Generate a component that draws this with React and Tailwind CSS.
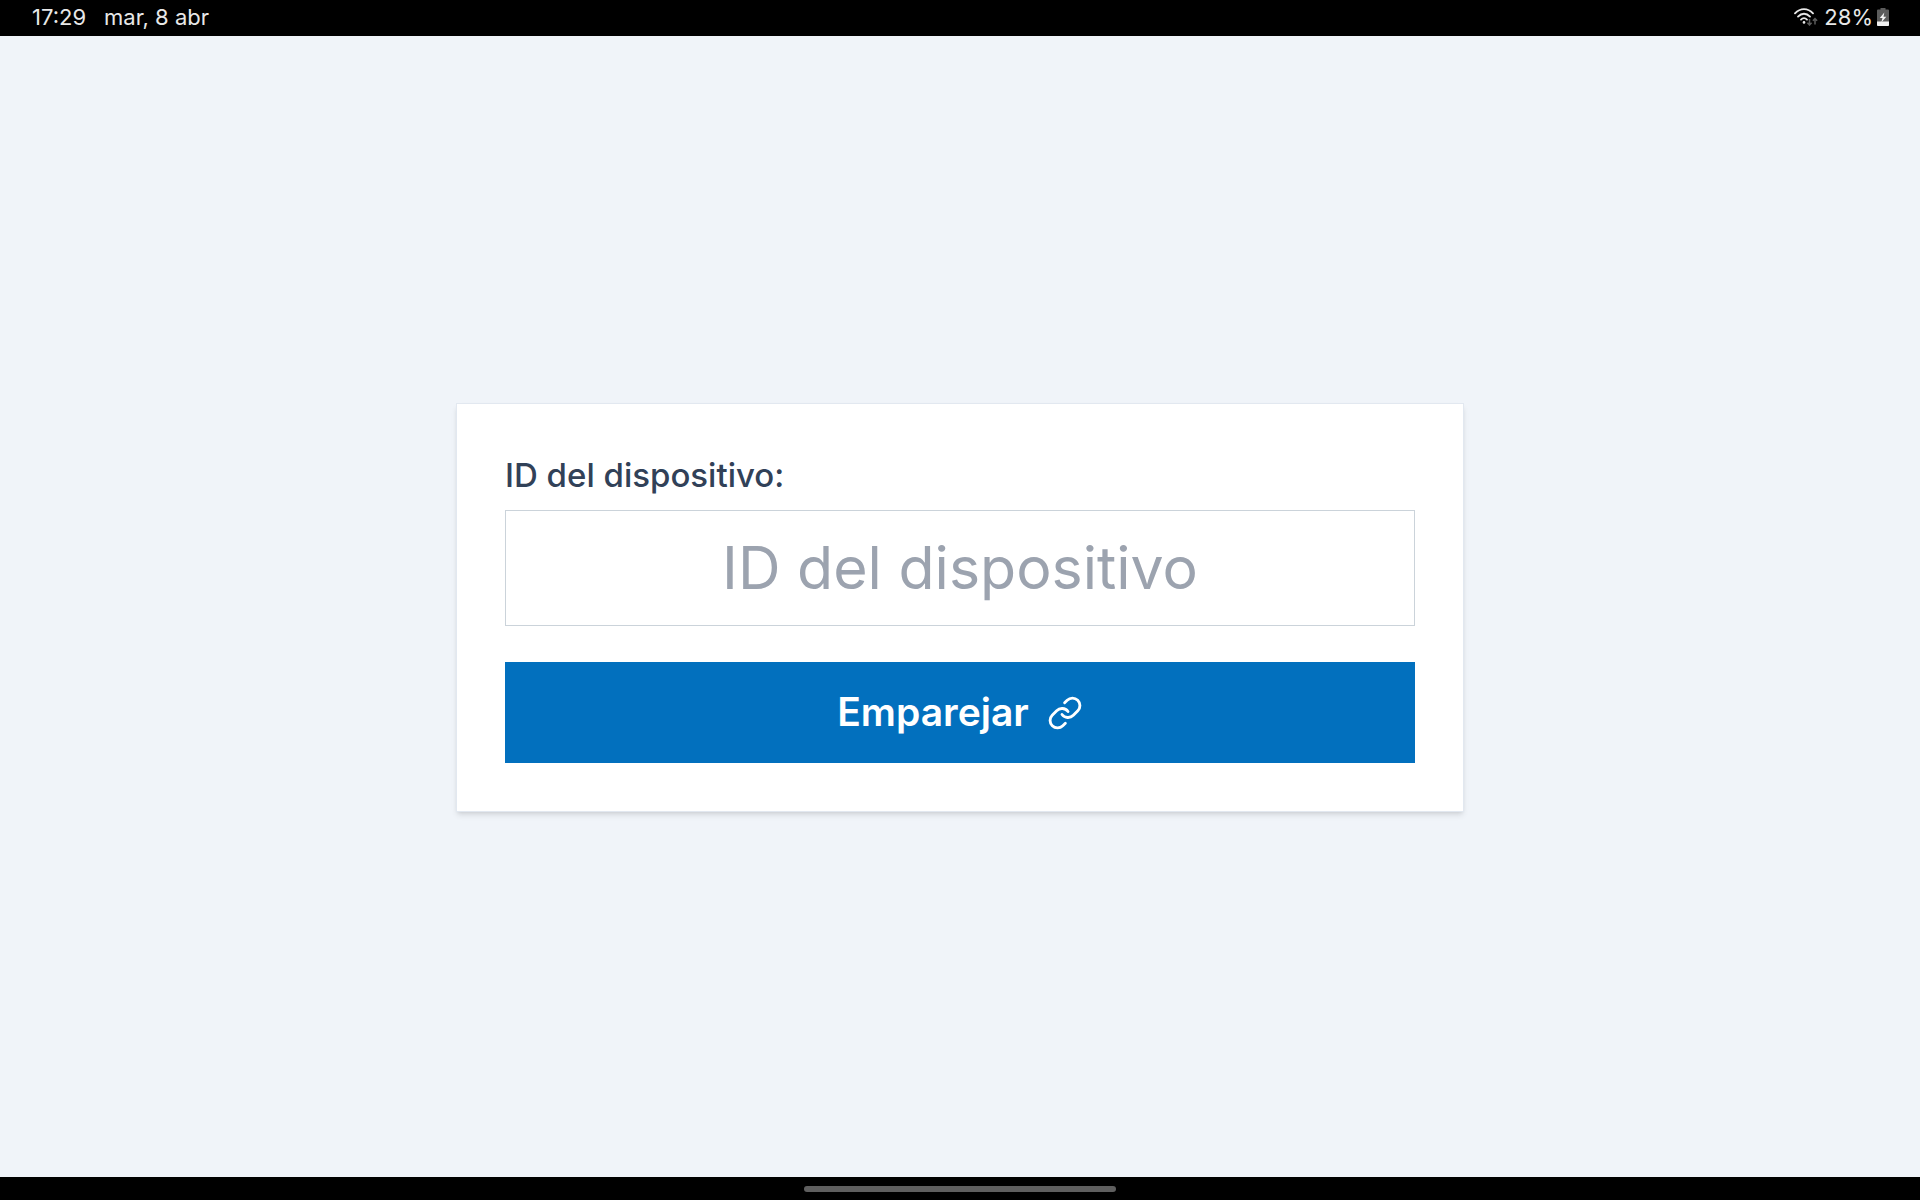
import React from "react";

const WifiIcon = () => (
  <svg viewBox="0 0 24 18" fill="none" className="h-[18px] w-6" aria-hidden="true">
    <g stroke="#e8e8e8" strokeWidth="1.8" strokeLinecap="round">
      <path d="M1 5.4C6.2-.4 13.8-.4 19 5.4" />
      <path d="M4 8.6c3.6-3.8 8.4-3.8 12 0" />
      <path d="M7 11.6c1.8-1.9 4.2-1.9 6 0" />
    </g>
    <circle cx="10" cy="14.4" r="1.3" fill="#e8e8e8" />
    <g stroke="#5c5c5c" strokeWidth="1.5">
      <path d="M15.5 11v6M13.4 14.8l2.1 2.2 2.1-2.2" />
      <path d="M21 16.5v-6M18.9 12.7l2.1-2.2 2.1 2.2" />
    </g>
  </svg>
);

const BatteryIcon = () => (
  <svg viewBox="0 0 12 18" className="h-[18px] w-3" aria-hidden="true">
    <path d="M3.5 0h5v1.5H11a1 1 0 0 1 1 1V17a1 1 0 0 1-1 1H1a1 1 0 0 1-1-1V2.5a1 1 0 0 1 1-1h2.5z" fill="#5c5c5c" />
    <path d="M0 13.5h12V17a1 1 0 0 1-1 1H1a1 1 0 0 1-1-1z" fill="#f0f0f0" />
    <path d="M7.3 4.5L2.8 10h2.7L4.3 14.5 9.3 8.8H6.5z" fill="#f5f5f5" />
  </svg>
);

const LinkIcon = () => (
  <svg
    viewBox="0 0 24 24"
    fill="none"
    stroke="currentColor"
    strokeWidth="1.9"
    strokeLinecap="round"
    strokeLinejoin="round"
    className="size-9"
    aria-hidden="true"
  >
    <path d="M10 13a5 5 0 0 0 7.54.54l3-3a5 5 0 0 0-7.07-7.07l-1.72 1.71" />
    <path d="M14 11a5 5 0 0 0-7.54-.54l-3 3a5 5 0 0 0 7.07 7.07l1.71-1.71" />
  </svg>
);

const StatusBar = () => (
  <header className="flex h-9 items-center justify-between bg-black pb-0.5 pl-8 pr-[31px] font-['Inter',sans-serif] text-[22px] leading-8 text-[#e8e8e8]">
    <div className="flex items-center gap-[18px]">
      <span>17:29</span>
      <span>mar, 8 abr</span>
    </div>
    <div className="flex items-center">
      <WifiIcon />
      <span className="ml-1.5 mr-1">28%</span>
      <BatteryIcon />
    </div>
  </header>
);

const PairForm = () => (
  <form
    onSubmit={(e) => e.preventDefault()}
    className="flex w-full max-w-[1008px] flex-col border border-slate-200 bg-white p-12 shadow-md"
  >
    <label htmlFor="deviceId" className="mb-3 text-[33px] font-medium leading-[46px] text-slate-700">
      ID del dispositivo:
    </label>
    <input
      id="deviceId"
      type="text"
      placeholder="ID del dispositivo"
      className="h-[116px] w-full border border-[#cbd3da] px-6 pb-0.5 text-center text-[59px] text-slate-700 placeholder:text-[#9ca3af]"
    />
    <button
      type="submit"
      className="mt-9 flex h-[101px] w-full items-center justify-center gap-[18px] bg-[#0270be] text-[39px] font-semibold text-white"
    >
      Emparejar
      <LinkIcon />
    </button>
  </form>
);

const App = () => (
  <div className="flex min-h-screen flex-col bg-[#f0f4f9] font-['Inter',sans-serif]">
    <StatusBar />
    <main className="flex flex-1 items-center justify-center pt-0.5">
      <PairForm />
    </main>
    <footer className="flex h-[23px] items-center justify-center bg-black">
      <div className="h-1.5 w-[312px] rounded-full bg-[#5f5f5f]" />
    </footer>
  </div>
);

export default App;
